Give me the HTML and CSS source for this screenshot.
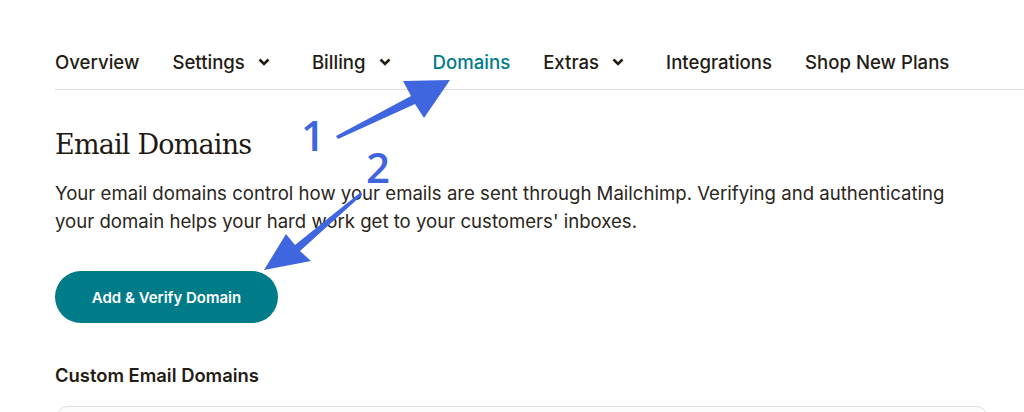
FILE: index.html
```html
<!DOCTYPE html>
<html lang="en">
<head>
  <meta charset="UTF-8">
  <meta name="viewport" content="width=device-width, initial-scale=1.0">
  <title>Email Domains</title>
  <link rel="stylesheet" href="styles.css">
</head>
<body>
  <div class="page">
    <!-- Account tabs -->
    <nav class="tabs">
      <a class="tab">Overview</a>
      <a class="tab">Settings <span class="chev"><svg viewBox="0 0 12 8" width="12" height="8"><path d="M1.5 1.5 6 6 10.5 1.5" fill="none" stroke="#241c15" stroke-width="2.6"/></svg></span></a>
      <a class="tab">Billing <span class="chev"><svg viewBox="0 0 12 8" width="12" height="8"><path d="M1.5 1.5 6 6 10.5 1.5" fill="none" stroke="#241c15" stroke-width="2.6"/></svg></span></a>
      <a class="tab active">Domains</a>
      <a class="tab">Extras <span class="chev"><svg viewBox="0 0 12 8" width="12" height="8"><path d="M1.5 1.5 6 6 10.5 1.5" fill="none" stroke="#241c15" stroke-width="2.6"/></svg></span></a>
      <a class="tab">Integrations</a>
      <a class="tab">Shop New Plans</a>
    </nav>

    <h1 class="title">Email Domains</h1>
    <p class="intro">Your email domains control how your emails are sent through Mailchimp. Verifying and authenticating your domain helps your hard work get to your customers' inboxes.</p>

    <button class="btn-primary">Add &amp; Verify Domain</button>

    <h3 class="section-title">Custom Email Domains</h3>
    <div class="card"></div>
  </div>

  <!-- Screenshot annotations -->
  <svg class="marks" width="1024" height="412" viewBox="0 0 1024 412">
    <polygon points="336,136 411,96 403,81 450,80 424,118 415,104 338,139" fill="#3f66de"/>
    <polygon points="361,192 295,245 286,234 264,270 311,261 300,251 362,195" fill="#3f66de"/>
    <text x="301" y="151" class="num">1</text>
    <text x="366" y="183" class="num">2</text>
  </svg>
</body>
</html>
```

FILE: styles.css
```css
body {
  margin: 0;
  font-family: Inter, "Noto Sans", sans-serif;
  color: #241c15;
  background-color: #fff;
  position: relative;
  overflow: hidden;
  height: 412px;
}
.page {
  padding-left: 55px;
}
.tabs {
  display: flex;
  gap: 33px;
  padding: 50px 0 15px;
  border-bottom: 1px solid #dcdcdc;
}
.tab {
  display: flex;
  align-items: center;
  font-size: 18.6px;
  line-height: 24px;
  font-weight: 500;
  color: #241c15;
  white-space: nowrap;
}
.tab.active {
  color: #007c89;
}
.chev {
  display: flex;
  margin: 0 9px 0 13px;
}
.title {
  margin: 37px 0 0;
  font-family: "DejaVu Serif", Georgia, serif;
  font-weight: 400;
  font-size: 27px;
  line-height: 36px;
  color: #1e1913;
  letter-spacing: -0.8px;
}
.intro {
  margin: 16px 0 0;
  width: 910px;
  font-size: 18.6px;
  line-height: 28px;
  color: #2b2620;
}
.btn-primary {
  margin-top: 36px;
  width: 223px;
  height: 52px;
  border: none;
  border-radius: 26px;
  background-color: #007c89;
  color: #fff;
  font-family: Inter, sans-serif;
  font-size: 15px;
  font-weight: 600;
  cursor: pointer;
}
.section-title {
  margin: 40px 0 0;
  font-size: 18.4px;
  line-height: 24px;
  font-weight: 600;
}
.card {
  margin: 19px 0 0 2px;
  width: 928px;
  height: 40px;
  border: 1px solid #dedede;
  border-radius: 10px;
  background-color: #fcfcfc;
}
.marks {
  position: absolute;
  left: 0;
  top: 0;
  pointer-events: none;
}
.num {
  font-family: "Open Sans", sans-serif;
  font-size: 42px;
  font-weight: 600;
  fill: #3f66de;
  stroke: #fff;
  stroke-width: 3px;
  paint-order: stroke;
}
```
